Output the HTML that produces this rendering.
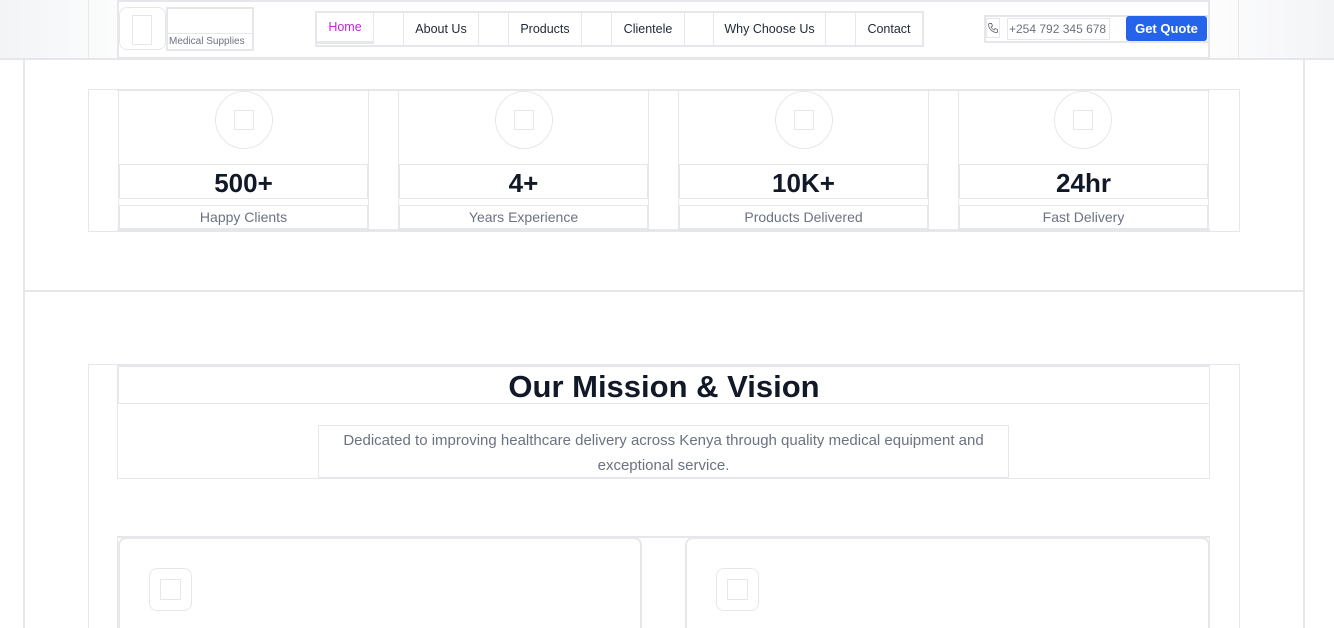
<!DOCTYPE html>
<html style="overflow:hidden;width:1334px;height:628px"><head><meta charset="utf-8"><style>
*{box-sizing:border-box;margin:0;padding:0}
body{width:1334px;height:628px;overflow:hidden;background:#fff;font-family:"Liberation Sans",sans-serif;position:relative;white-space:nowrap}
.a{position:absolute}
.b{border:1px solid #e5e7eb}
.b2{border:2px solid #e5e7eb}
.c{display:flex;align-items:center;justify-content:center}
.nav{font-size:12.5px;color:#1f2937}
</style></head><body>
<div class="a" style="left:0;top:0;width:1334px;height:59px;background:linear-gradient(90deg,#f3f4f6 0%,#fff 12%,#fff 88%,#f3f4f6 100%)"></div>
<div class="a" style="left:0;top:58px;width:1334px;height:2px;background:#e5e7eb"></div>
<div class="a b" style="left:88px;top:-1px;width:1151px;height:60px"></div>
<div class="a b2" style="left:117px;top:0;width:1093px;height:59px;background:#fff"></div>
<div class="a b" style="left:119px;top:7px;width:47px;height:43px;border-radius:8px"></div>
<div class="a b" style="left:132px;top:15px;width:20px;height:30px"></div>
<div class="a b2" style="left:166px;top:7px;width:88px;height:44px"></div>
<div class="a b" style="left:167px;top:33px;width:86px;height:17px;font-size:10px;color:#6b7280;padding-left:1px;line-height:15px">Medical Supplies</div>
<div class="a b2" style="left:315px;top:11px;width:609px;height:36px"></div>
<div class="a b c nav" style="left:316px;top:12px;width:58px;height:32px;color:#c026d3;border-bottom:3px solid #e5e7eb">Home</div>
<div class="a b c nav" style="left:403px;top:12px;width:76px;height:34px">About Us</div>
<div class="a b c nav" style="left:508px;top:12px;width:74px;height:34px">Products</div>
<div class="a b c nav" style="left:611px;top:12px;width:74px;height:34px">Clientele</div>
<div class="a b c nav" style="left:713px;top:12px;width:113px;height:34px">Why Choose Us</div>
<div class="a b c nav" style="left:855px;top:12px;width:68px;height:34px">Contact</div>
<div class="a b" style="left:984px;top:15px;width:1px;height:28px"></div>
<div class="a b" style="left:984px;top:15px;width:226px;height:1px"></div>
<div class="a b" style="left:984px;top:41px;width:226px;height:1px"></div>
<div class="a b c" style="left:986px;top:18px;width:14px;height:20px"><svg width="12" height="12" viewBox="0 0 24 24" fill="none" stroke="#6b7280" stroke-width="1.8"><path d="M5 3h4l2 5-3 2a12 12 0 0 0 6 6l2-3 5 2v4a2 2 0 0 1-2 2A17 17 0 0 1 3 5a2 2 0 0 1 2-2"/></svg></div>
<div class="a b" style="left:1007px;top:18px;width:103px;height:22px;font-size:12px;color:#6b7280;line-height:20px;padding-left:1px;overflow:hidden">+254 792 345 678</div>
<div class="a c" style="left:1126px;top:16px;width:81px;height:25px;background:#2563eb;border-radius:3px;color:#fff;font-size:13px;font-weight:700">Get Quote</div>

<div class="a" style="left:23px;top:59px;width:2px;height:569px;background:#e5e7eb"></div>
<div class="a" style="left:1303px;top:59px;width:2px;height:569px;background:#e5e7eb"></div>

<div class="a b" style="left:88px;top:89px;width:1152px;height:143px"></div>
<div class="a" style="left:117px;top:89px;width:1093px;height:2px;background:#e5e7eb"></div>
<div class="a" style="left:117px;top:229px;width:1093px;height:2px;background:#e5e7eb"></div>

<div class="a b" style="left:118px;top:90px;width:251px;height:141px"></div>
<div class="a b" style="left:398px;top:90px;width:251px;height:141px"></div>
<div class="a b" style="left:678px;top:90px;width:251px;height:141px"></div>
<div class="a b" style="left:958px;top:90px;width:251px;height:141px"></div>

<div class="a b" style="left:215px;top:91px;width:58px;height:58px;border-radius:50%"></div>
<div class="a b" style="left:234px;top:110px;width:20px;height:20px"></div>
<div class="a b" style="left:495px;top:91px;width:58px;height:58px;border-radius:50%"></div>
<div class="a b" style="left:514px;top:110px;width:20px;height:20px"></div>
<div class="a b" style="left:775px;top:91px;width:58px;height:58px;border-radius:50%"></div>
<div class="a b" style="left:794px;top:110px;width:20px;height:20px"></div>
<div class="a b" style="left:1054px;top:91px;width:58px;height:58px;border-radius:50%"></div>
<div class="a b" style="left:1073px;top:110px;width:20px;height:20px"></div>

<div class="a b c" style="left:119px;top:164px;width:249px;height:35px;font-size:26px;font-weight:700;color:#111827;padding-top:3px">500+</div>
<div class="a b c" style="left:399px;top:164px;width:249px;height:35px;font-size:26px;font-weight:700;color:#111827;padding-top:3px">4+</div>
<div class="a b c" style="left:679px;top:164px;width:249px;height:35px;font-size:26px;font-weight:700;color:#111827;padding-top:3px">10K+</div>
<div class="a b c" style="left:959px;top:164px;width:249px;height:35px;font-size:26px;font-weight:700;color:#111827;padding-top:3px">24hr</div>
<div class="a b c" style="left:119px;top:205px;width:249px;height:24px;font-size:14px;color:#6b7280">Happy Clients</div>
<div class="a b c" style="left:399px;top:205px;width:249px;height:24px;font-size:14px;color:#6b7280">Years Experience</div>
<div class="a b c" style="left:679px;top:205px;width:249px;height:24px;font-size:14px;color:#6b7280">Products Delivered</div>
<div class="a b c" style="left:959px;top:205px;width:249px;height:24px;font-size:14px;color:#6b7280">Fast Delivery</div>

<div class="a" style="left:23px;top:290px;width:1282px;height:2px;background:#e5e7eb"></div>

<div class="a b" style="left:88px;top:364px;width:1152px;height:270px"></div>
<div class="a b" style="left:117px;top:365px;width:1093px;height:114px"></div>
<div class="a b c" style="left:118px;top:365px;width:1092px;height:39px;border-top:2px solid #e5e7eb;font-size:31px;font-weight:700;color:#111827;padding-top:4px">Our Mission &amp; Vision</div>
<div class="a b" style="left:318px;top:425px;width:691px;height:53px;font-size:15px;line-height:25px;color:#6b7280;text-align:center;padding:2px 14px 0;white-space:normal">Dedicated to improving healthcare delivery across Kenya through quality medical equipment and exceptional service.</div>

<div class="a b" style="left:117px;top:536px;width:1093px;height:100px;border-top:2px solid #e5e7eb"></div>
<div class="a b2" style="left:118px;top:537px;width:524px;height:100px;border-radius:8px 8px 0 0"></div>
<div class="a b2" style="left:685px;top:537px;width:525px;height:100px;border-radius:8px 8px 0 0"></div>
<div class="a b" style="left:149px;top:568px;width:43px;height:43px;border-radius:8px"></div>
<div class="a b" style="left:160px;top:579px;width:21px;height:21px"></div>
<div class="a b" style="left:716px;top:568px;width:43px;height:43px;border-radius:8px"></div>
<div class="a b" style="left:727px;top:579px;width:21px;height:21px"></div>
</body></html>
